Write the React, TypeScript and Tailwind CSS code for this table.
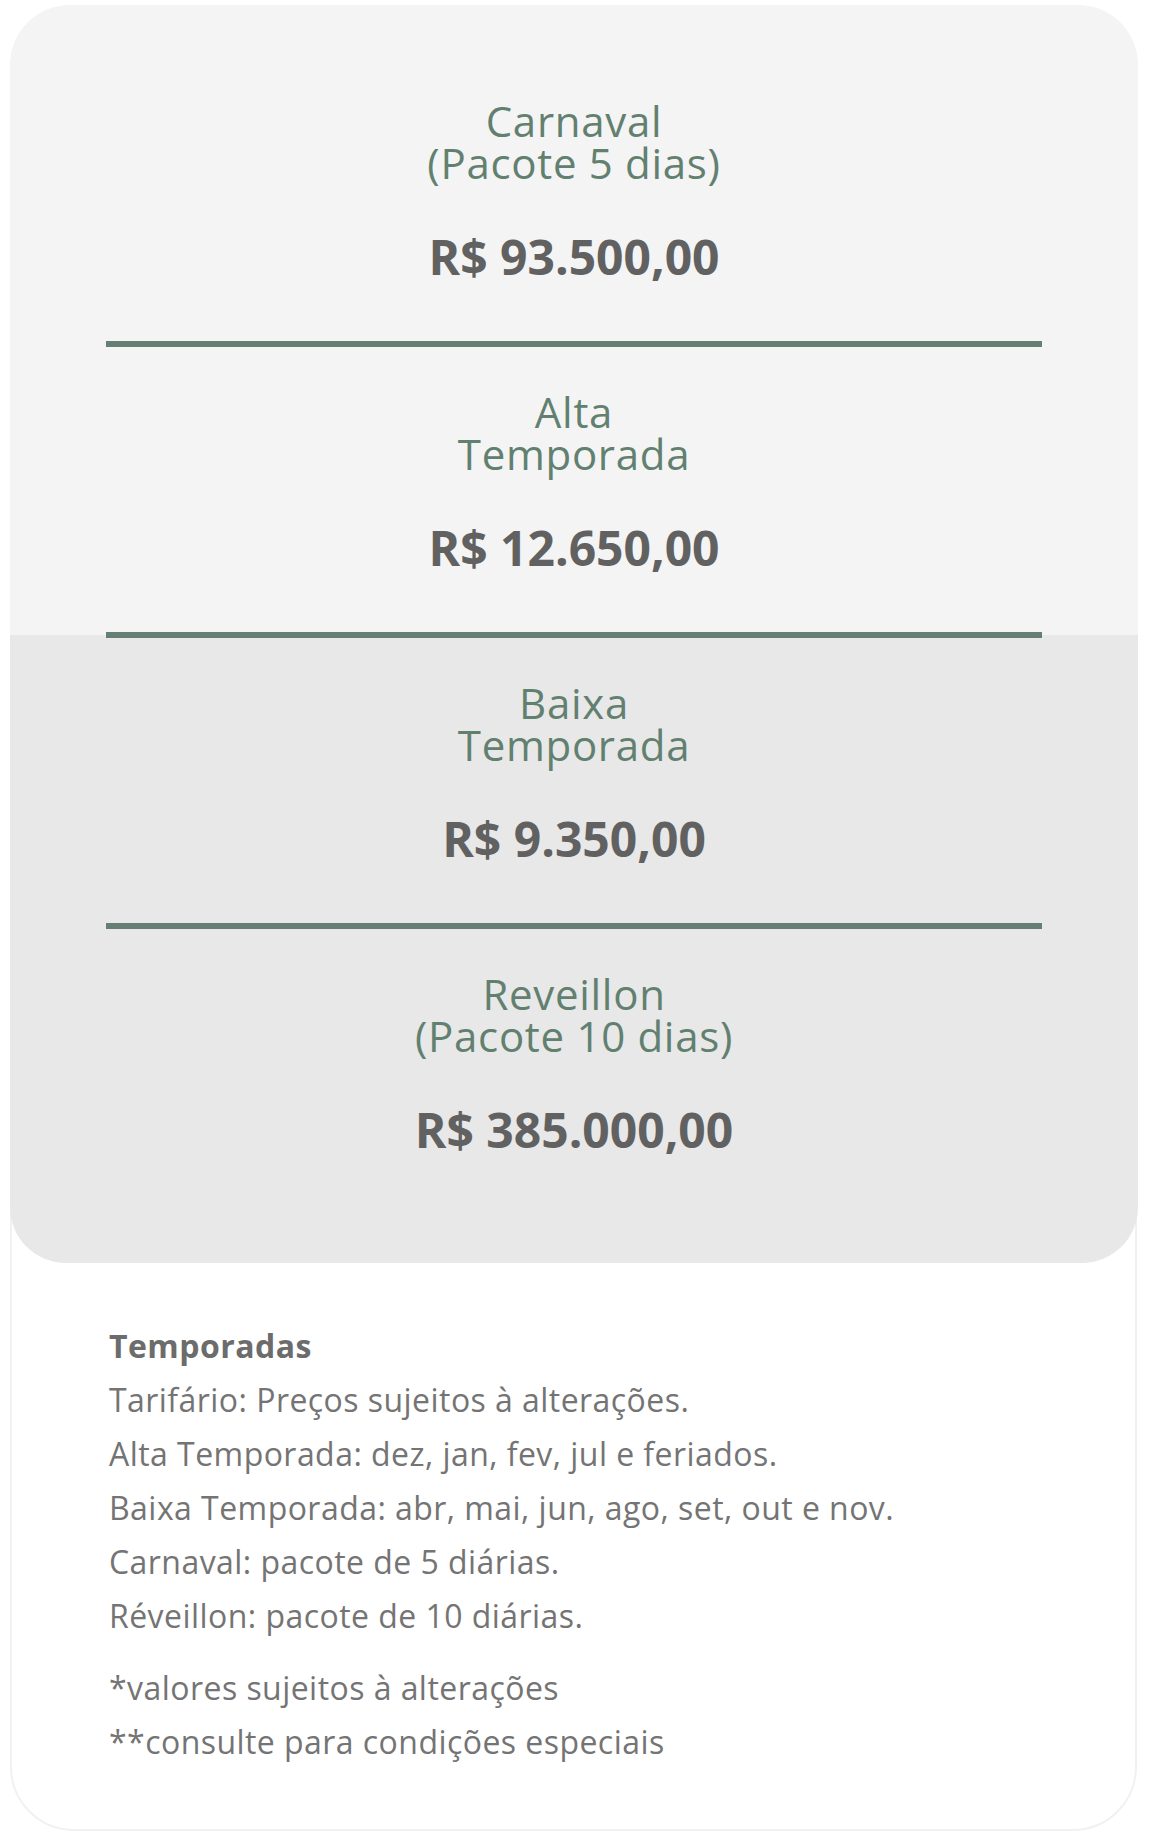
import React from "react";

type Item = { t1: string; t2: string; price: string };

function Entry({ item }: { item: Item }) {
  return (
    <div className="flex flex-col items-center pt-[44px]">
      <div className="text-center text-[42px] leading-[42px] tracking-[0.7px] text-[#62806f]">
        <div>{item.t1}</div>
        <div>{item.t2}</div>
      </div>
      <div className="mt-[46px] text-[48px] leading-[54px] font-bold text-[#616161]">{item.price}</div>
    </div>
  );
}

const notes = [
  "Tarifário: Preços sujeitos à alterações.",
  "Alta Temporada: dez, jan, fev, jul e feriados.",
  "Baixa Temporada: abr, mai, jun, ago, set, out e nov.",
  "Carnaval: pacote de 5 diárias.",
  "Réveillon: pacote de 10 diárias.",
];

export default function App() {
  return (
    <div
      className="min-h-[1838px] bg-white pt-[5px] pl-[10px]"
      style={{ fontFamily: '"Open Sans", "Noto Sans", sans-serif' }}
    >
      <div className="w-[1127px] rounded-[64px] border-2 border-[#f1f1f1] bg-white">
        <div className="-ml-[2px] -mt-[2px] w-[1128px] overflow-hidden rounded-[60px] rounded-b-[56px]">
          <div className="bg-[#f4f4f4] pt-[51px]">
            <div className="h-[285px]">
              <Entry item={{ t1: "Carnaval", t2: "(Pacote 5 dias)", price: "R$ 93.500,00" }} />
            </div>
            <div className="mx-[96px] h-[6px] bg-[#667f74]" />
            <div className="h-[285px]">
              <Entry item={{ t1: "Alta", t2: "Temporada", price: "R$ 12.650,00" }} />
            </div>
            <div className="mx-[96px] h-[3px] bg-[#667f74]" />
          </div>
          <div className="bg-[#e8e8e8] pb-[106px]">
            <div className="mx-[96px] h-[3px] bg-[#667f74]" />
            <div className="h-[285px]">
              <Entry item={{ t1: "Baixa", t2: "Temporada", price: "R$ 9.350,00" }} />
            </div>
            <div className="mx-[96px] h-[6px] bg-[#667f74]" />
            <Entry item={{ t1: "Reveillon", t2: "(Pacote 10 dias)", price: "R$ 385.000,00" }} />
          </div>
        </div>
        <div className="pl-[97px] pt-[56px] pb-[60px] text-[32px] leading-[54px] tracking-[0.45px] text-[#747474]">
          <div className="font-bold text-[#6c6c6c]">Temporadas</div>
          {notes.map((n) => (
            <div key={n}>{n}</div>
          ))}
          <div className="mt-[18px]">*valores sujeitos à alterações</div>
          <div>**consulte para condições especiais</div>
        </div>
      </div>
    </div>
  );
}
